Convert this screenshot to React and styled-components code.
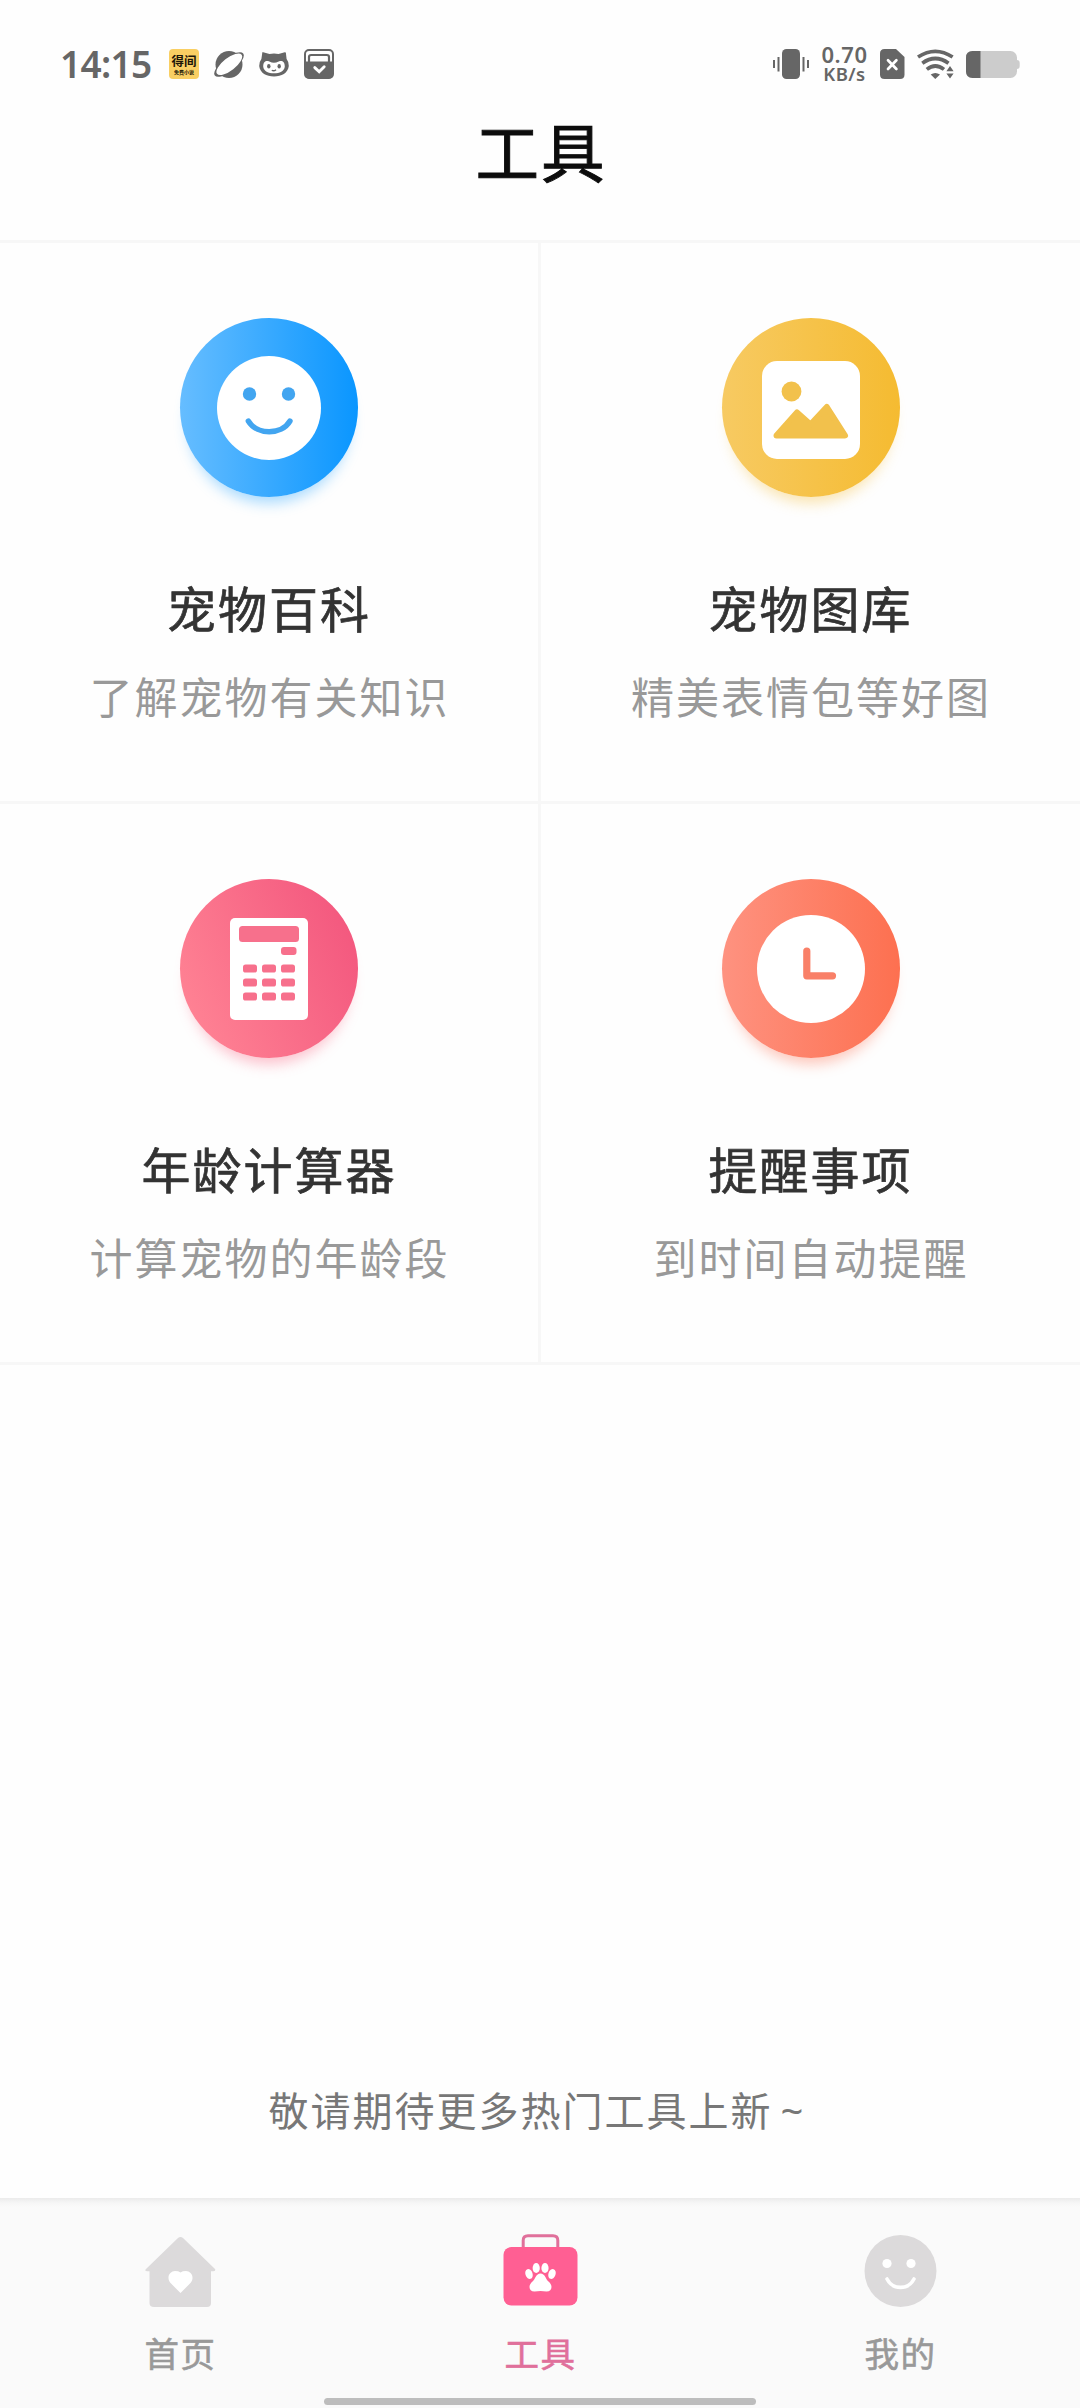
import React from 'react';
import styled, { createGlobalStyle } from 'styled-components';

const tools = [
  {
    name: '宠物百科',
    desc: '了解宠物有关知识',
    gradient: 'linear-gradient(90deg, #66bdff, #0a96ff)',
    shadow: 'rgba(40, 165, 255, 0.4)',
    icon: 'smile'
  },
  {
    name: '宠物图库',
    desc: '精美表情包等好图',
    gradient: 'linear-gradient(90deg, #f7ca62, #f5bb31)',
    shadow: 'rgba(246, 190, 60, 0.4)',
    icon: 'picture'
  },
  {
    name: '年龄计算器',
    desc: '计算宠物的年龄段',
    gradient: 'linear-gradient(66deg, #ff8394 8%, #f3577e 92%)',
    shadow: 'rgba(250, 100, 130, 0.4)',
    icon: 'calculator'
  },
  {
    name: '提醒事项',
    desc: '到时间自动提醒',
    gradient: 'linear-gradient(90deg, #fe9280, #fd7050)',
    shadow: 'rgba(253, 115, 85, 0.4)',
    icon: 'clock'
  }
];

const tabs = [
  { label: '首页', icon: 'home' },
  { label: '工具', icon: 'bag', active: true },
  { label: '我的', icon: 'me' }
];

const toolIcons = {
  smile: (
    <>
      <circle cx="89" cy="90" r="52" fill="#fff" />
      <g fill="#42a5f0">
        <circle cx="69.5" cy="76" r="6.7" />
        <circle cx="108.5" cy="76" r="6.7" />
      </g>
      <path
        d="M68.3 103 C77 117.3 101.5 117.3 110 103"
        fill="none"
        stroke="#42a5f0"
        strokeWidth="5.4"
        strokeLinecap="round"
      />
    </>
  ),
  picture: (
    <>
      <rect x="40" y="43" width="98" height="98" rx="15" fill="#fff" />
      <g fill="#f2c14c" stroke="#f2c14c" strokeLinejoin="round">
        <circle cx="69.5" cy="73.5" r="9.9" stroke="none" />
        <path
          d="M54.5 117.5 L75 94.5 L88.5 106.5 L104.8 89 L123 117.5 Z"
          strokeWidth="6"
        />
      </g>
    </>
  ),
  calculator: (
    <>
      <rect x="50" y="39" width="78" height="102" rx="5" fill="#fff" />
      <g fill="#f7708c">
        <rect x="59" y="47" width="60" height="16" rx="3.5" />
        <rect x="101" y="68" width="15.5" height="8" rx="3" />
        {[85.5, 99.5, 113.5].map(y =>
          [63, 82, 101].map(x => (
            <rect key={x + '-' + y} x={x} y={y} width="14" height="8" rx="2.6" />
          ))
        )}
      </g>
    </>
  ),
  clock: (
    <>
      <circle cx="89" cy="90" r="54" fill="#fff" />
      <path
        d="M84.8 72 V96.8 H110.5"
        fill="none"
        stroke="#f98068"
        strokeWidth="7.2"
        strokeLinecap="round"
        strokeLinejoin="round"
      />
    </>
  )
};

const tabIcons = {
  home: (
    <>
      <path
        d="M3 35 L35 4 Q37.5 2 40 4 L72 35 Q73 37 70 37.2 H68 V69 Q68 73 64 73 H11 Q6.5 73 6.5 69 V37.2 H4 Q1 37 3 35 Z"
        fill="#dcdadb"
      />
      <path
        d="M37.5 59 L27.3 48.8 C23 43 27 37 32 37 Q35.5 37 37.5 38.4 Q39.5 37 43 37 C48 37 52 43 47.7 48.8 Z"
        fill="#fff"
      />
    </>
  ),
  bag: (
    <>
      <path
        d="M20.2 15 V6.5 Q20.2 1.7 25 1.7 H50 Q54.8 1.7 54.8 6.5 V15"
        fill="none"
        stroke="#e0709b"
        strokeWidth="3"
      />
      <rect x="0.5" y="13" width="74" height="58.5" rx="8" fill="#ff5f93" />
      <g fill="#fff">
        <ellipse cx="26" cy="40" rx="3.6" ry="5.1" transform="rotate(-18 26 40)" />
        <ellipse cx="33.2" cy="34" rx="3.6" ry="5.1" />
        <ellipse cx="42" cy="34" rx="3.6" ry="5.1" />
        <ellipse cx="49" cy="40" rx="3.6" ry="5.1" transform="rotate(18 49 40)" />
        <path d="M37.5 39.5 C33 39.5 32.5 45 29.5 47.5 C25 51 25.5 57.5 31.5 57.6 Q37.5 56.6 43.5 57.6 C49.5 57.5 50 51 45.5 47.5 C42.5 45 42 39.5 37.5 39.5 Z" />
      </g>
    </>
  ),
  me: (
    <>
      <circle cx="37.5" cy="37" r="36" fill="#dcdadb" />
      <circle cx="24" cy="29.5" r="4.6" fill="#fff" />
      <circle cx="48" cy="29.5" r="4.6" fill="#fff" />
      <path
        d="M24 45 C30 56.2 45 56.2 51 45"
        fill="none"
        stroke="#fff"
        strokeWidth="3.6"
        strokeLinecap="round"
      />
    </>
  )
};

const PlanetIcon = () => (
  <svg width="30" height="30" viewBox="0 0 30 30">
    <circle cx="15" cy="15.5" r="13.5" fill="#666" />
    <g transform="rotate(-38 15 15.5)">
      <ellipse cx="15" cy="15.5" rx="18" ry="6.8" fill="#666" />
      <ellipse cx="15.4" cy="15.5" rx="15.6" ry="6.3" fill="#fff" />
    </g>
  </svg>
);

const CatIcon = () => (
  <svg width="30" height="30" viewBox="0 0 30 30">
    <path
      d="M3.2 4.5 Q2.6 3 4.2 3.2 L10.5 5 Q15 4 19.5 5 L25.8 3.2 Q27.4 3 27 5 L27.6 10 Q30 13 29.8 17 C29 24 22.5 27.5 15 27.5 S1 24 .2 17 Q0 13 2.4 10 Z"
      fill="#666"
    />
    <path
      d="M4.2 17.5 C4.2 12.5 7 11.2 9.8 12.2 Q13 13.7 15 13.8 Q17 13.7 20.2 12.2 C23 11.2 25.8 12.5 25.8 17.5 C25.4 22.3 20.5 24.3 15 24.3 S4.6 22.3 4.2 17.5 Z"
      fill="#fff"
    />
    <g fill="#666">
      <ellipse cx="9.8" cy="17.2" rx="1.7" ry="2.3" />
      <ellipse cx="20.2" cy="17.2" rx="1.7" ry="2.3" />
    </g>
    <path d="M12.8 21.2 Q14.8 22.6 17 20.8" fill="none" stroke="#666" strokeWidth="1.4" />
  </svg>
);

const BoxIcon = () => (
  <svg width="30" height="30" viewBox="0 0 30 30">
    <rect x="1" y="1" width="28" height="28" rx="4" fill="#fff" stroke="#666" strokeWidth="2" />
    <path d="M5 13 V8 Q5 6 7.2 6 H22.8 Q25 6 25 8 V13" fill="none" stroke="#666" strokeWidth="2.2" />
    <path d="M1 12.6 H29 V26 Q29 29.4 25 29.4 H5 Q1 29.4 1 26 Z" fill="#666" />
    <path
      d="M10.8 18.6 L15.2 22.8 L20.2 17.8"
      fill="none"
      stroke="#fff"
      strokeWidth="2.9"
      strokeLinecap="round"
    />
  </svg>
);

const VibrateIcon = () => (
  <svg width="36" height="30" viewBox="0 0 36 30">
    <rect x="9" y="0" width="18" height="30" rx="4.5" fill="#666" />
    <path d="M1 11 V19 M5.5 8 V22.4 M30.5 8 V22.4 M35 11 V19" stroke="#666" strokeWidth="2" />
  </svg>
);

const SimIcon = () => (
  <svg width="25" height="30" viewBox="0 0 25 30">
    <path d="M4.5 0 H16 L24.5 8 V25.5 Q24.5 30 20 30 H4.5 Q0 30 0 25.5 V4.5 Q0 0 4.5 0 Z" fill="#666" />
    <path
      d="M8 11.3 L16.4 20 M16.4 11.3 L8 20"
      stroke="#fff"
      strokeWidth="2.7"
      strokeLinecap="round"
    />
  </svg>
);

const WifiIcon = () => (
  <svg width="37" height="30" viewBox="0 0 37 30">
    <g fill="none" stroke="#666" strokeWidth="3.7">
      <path d="M1 8 Q18.3 -3.4 35.6 8" />
      <path d="M5.3 14.2 Q18.3 4.8 31.5 14.2" />
      <path d="M9.8 20.4 Q18.3 13.6 27 20.4" />
    </g>
    <path d="M13.7 25.6 Q18.3 22.6 23 25.6 L18.3 30 Z" fill="#666" />
    <path d="M28 23.8 L33 15.5 L38 23.8 L38 25 L33 31 L28 25 Z" fill="#fff" />
    <path d="M29.4 22.2 L33 17 L36.6 22.2 Z M29.4 24.6 H36.6 L33 29.6 Z" fill="#666" />
  </svg>
);

const BatteryIcon = () => (
  <svg width="54" height="27" viewBox="0 0 54 27">
    <rect x="48" y="9" width="5.7" height="9" rx="3" fill="#ccc" />
    <rect x="0" y="0" width="51" height="27" rx="6.5" fill="#ccc" />
    <path d="M14.5 0 H6.5 Q0 0 0 6.5 V20.5 Q0 27 6.5 27 H14.5 Z" fill="#666" />
  </svg>
);

const App = () => (
  <Page>
    <GlobalStyle />
    <StatusBar>
      <StatusGroup $gap="15px">
        <Time>14:15</Time>
        <AppBadge>
          <BadgeName>得间</BadgeName>
          <BadgeSub>免费小说</BadgeSub>
        </AppBadge>
        <PlanetIcon />
        <CatIcon />
        <BoxIcon />
      </StatusGroup>
      <StatusGroup $gap="12px">
        <VibrateIcon />
        <Speed>
          <SpeedValue>0.70</SpeedValue>
          <SpeedUnit>KB/s</SpeedUnit>
        </Speed>
        <SimIcon />
        <WifiIcon />
        <BatteryIcon />
      </StatusGroup>
    </StatusBar>
    <Header>工具</Header>
    <Grid>
      {tools.map(t => (
        <Tile key={t.name}>
          <IconCircle $gradient={t.gradient} $shadow={t.shadow}>
            <svg width="178" height="179" viewBox="0 0 178 179">
              {toolIcons[t.icon]}
            </svg>
          </IconCircle>
          <TileName>{t.name}</TileName>
          <TileDesc>{t.desc}</TileDesc>
        </Tile>
      ))}
    </Grid>
    <Notice>
      敬请期待更多热门工具上新<Tilde>~</Tilde>
    </Notice>
    <TabBar>
      <Tabs>
        {tabs.map(t => (
          <Tab key={t.label}>
            <svg width="75" height="74" viewBox="0 0 75 74">
              {tabIcons[t.icon]}
            </svg>
            <TabLabel $active={t.active}>{t.label}</TabLabel>
          </Tab>
        ))}
      </Tabs>
      <HomeIndicator />
    </TabBar>
  </Page>
);

const GlobalStyle = createGlobalStyle`
  body {
    margin: 0;
    background: #fefefe;
  }

  svg {
    display: block;
    flex: none;
  }
`;

const Page = styled.div`
  display: flex;
  flex-direction: column;
  width: 1080px;
  height: 2408px;
  overflow: hidden;
  background: #fefefe;
  font-family: 'Noto Sans CJK SC', sans-serif;
`;

const StatusBar = styled.div`
  display: flex;
  align-items: center;
  justify-content: space-between;
  box-sizing: border-box;
  height: 108px;
  padding: 20px 60px 0 60px;
  color: #666;
`;

const StatusGroup = styled.div`
  display: flex;
  align-items: center;
  gap: ${props => props.$gap};
`;

const Time = styled.div`
  width: 94px;
  font-family: 'Noto Sans', sans-serif;
  font-size: 37px;
  font-weight: 600;
  letter-spacing: -0.7px;
  line-height: 40px;
  white-space: nowrap;
`;

const AppBadge = styled.div`
  display: flex;
  flex-direction: column;
  align-items: center;
  justify-content: center;
  width: 30px;
  height: 30px;
  border-radius: 4px;
  background: #f9cf63;
  color: #1c1608;
  white-space: nowrap;
`;

const BadgeName = styled.div`
  font-size: 12.5px;
  font-weight: 700;
  line-height: 15px;
`;

const BadgeSub = styled.div`
  font-size: 5px;
  font-weight: 700;
  line-height: 7px;
`;

const Speed = styled.div`
  display: flex;
  flex-direction: column;
  align-items: center;
  width: 47px;
  font-family: 'Noto Sans', sans-serif;
  font-weight: 600;
  white-space: nowrap;
`;

const SpeedValue = styled.div`
  font-size: 22px;
  letter-spacing: 0.6px;
  line-height: 18px;
`;

const SpeedUnit = styled.div`
  font-size: 18.5px;
  letter-spacing: 0.4px;
  line-height: 21px;
`;

const Header = styled.div`
  box-sizing: border-box;
  height: 135px;
  padding-left: 2px;
  border-bottom: 3px solid #f7f7f7;
  color: #0c0c0c;
  font-size: 63.5px;
  letter-spacing: 2px;
  line-height: 83px;
  text-align: center;
  -webkit-text-stroke: 0.9px;
`;

const Grid = styled.div`
  display: grid;
  grid-template-columns: 541px 539px;
  grid-auto-rows: 561px;
`;

const Tile = styled.div`
  display: flex;
  flex-direction: column;
  align-items: center;
  box-sizing: border-box;
  padding-top: 75px;
  border-bottom: 3px solid #f7f7f7;

  &:nth-child(odd) {
    border-right: 3px solid #f7f7f7;
  }
`;

const IconCircle = styled.div`
  width: 178px;
  height: 179px;
  border-radius: 50%;
  background: ${props => props.$gradient};
  box-shadow: 0 14px 14px -8px ${props => props.$shadow};
`;

const TileName = styled.div`
  margin-top: 74px;
  color: #333;
  font-size: 49px;
  letter-spacing: 2px;
  line-height: 72px;
  -webkit-text-stroke: 0.7px;
`;

const TileDesc = styled.div`
  margin-top: 20px;
  padding-left: 1px;
  color: #999;
  font-size: 43px;
  letter-spacing: 2px;
  line-height: 64px;
`;

const Notice = styled.div`
  margin-top: auto;
  margin-bottom: 57px;
  padding-right: 6px;
  color: #777;
  font-size: 40px;
  letter-spacing: 2px;
  line-height: 60px;
  text-align: center;
`;

const Tilde = styled.span`
  margin-left: 8px;
  font-family: 'Noto Sans', sans-serif;
`;

const TabBar = styled.div`
  display: flex;
  flex-direction: column;
  align-items: center;
  box-sizing: border-box;
  height: 210px;
  padding-top: 36px;
  background: linear-gradient(#ebebeb, #f6f6f6 5px, #fafafa 9px);
`;

const Tabs = styled.div`
  display: grid;
  grid-template-columns: repeat(3, 1fr);
  width: 100%;
`;

const Tab = styled.div`
  display: flex;
  flex-direction: column;
  align-items: center;
`;

const TabLabel = styled.div`
  margin-top: 19px;
  padding-left: 1px;
  color: ${props => (props.$active ? '#e0709b' : '#999')};
  font-size: 34.5px;
  letter-spacing: 1.5px;
  line-height: 50px;
  -webkit-text-stroke: 0.6px;
`;

const HomeIndicator = styled.div`
  width: 432px;
  height: 7px;
  margin-top: auto;
  margin-bottom: 3px;
  border-radius: 4px;
  background: #bdbdbd;
`;

export default App;
